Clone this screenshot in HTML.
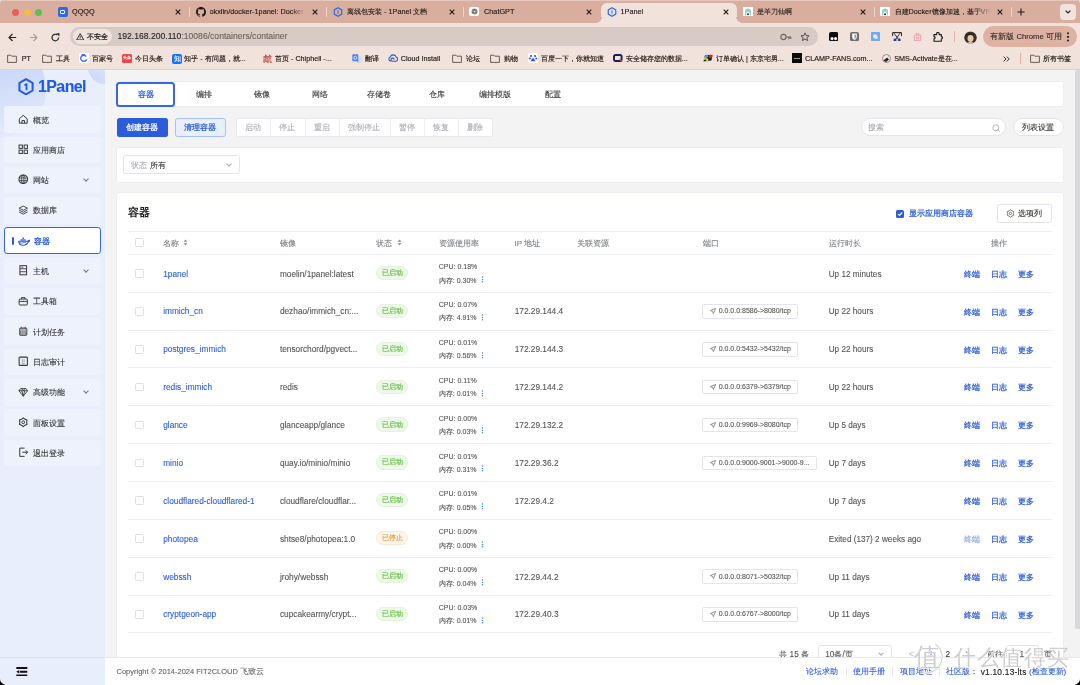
<!DOCTYPE html><html><head><meta charset="utf-8"><style>*{margin:0;padding:0;box-sizing:border-box}
html,body{width:1080px;height:685px;overflow:hidden;background:linear-gradient(#D3DCDF 0,#D3DCDF 50%,#000 50%)}
body{font-family:"Liberation Sans",sans-serif;position:relative;color:#333;-webkit-text-stroke:0.1px}
.a{position:absolute;white-space:nowrap}
#win{will-change:transform;position:absolute;left:0;top:0;width:1080px;height:685px;overflow:hidden;border-radius:4px 4px 7px 7px;background:#F3F3F3}
#tabs{position:absolute;left:0;top:0;width:1080px;height:23px;background:#D9AE9E;border-top:1px solid #E6C6BA}
.dot{position:absolute;top:8.5px;width:7px;height:7px;border-radius:50%}
.tt{position:absolute;font-size:7.3px;color:#1E1714;-webkit-text-stroke:0.12px;white-space:nowrap;overflow:hidden}
.tx{position:absolute;top:7.6px;width:8px;height:8px}
.sep{position:absolute;top:7px;width:1.2px;height:10px;background:#EDD3C9}
.fav{position:absolute;top:7px;width:10px;height:10px;border-radius:2px}
#tool{position:absolute;left:0;top:23px;width:1080px;height:25px;background:#F2E2DC}
#bm{position:absolute;left:0;top:48px;width:1080px;height:22px;background:#F2E2DC}
.bmi{position:absolute;top:54.3px;font-size:7.2px;color:#1E1714;-webkit-text-stroke:0.15px;white-space:nowrap}
.bic{position:absolute;top:54px;width:9px;height:9px;border-radius:1.5px}
#side{position:absolute;left:0;top:70px;width:105px;height:615px;background:#E8EEFB;overflow:hidden}
.mi{position:absolute;left:4px;width:96.5px;height:26.5px;background:#EEF2FC;border-radius:3px;font-size:8.6px;color:#333}
.mi .t{position:absolute;left:29px;top:8px;white-space:nowrap}
.mi svg{position:absolute;left:13.5px;top:7.5px}
.chev{position:absolute;width:4px;height:4px;border-right:1px solid #777;border-bottom:1px solid #777;transform:rotate(45deg)}
#main{position:absolute;left:105px;top:70px;width:975px;height:615px;background:#F2F2F2;overflow:hidden}
.card{position:absolute;background:#fff;border-radius:3px}
.btn{position:absolute;font-size:8.3px;text-align:center;border-radius:2.5px;white-space:nowrap}
.th{position:absolute;font-size:8.3px;color:#808080;white-space:nowrap}
.hl{position:absolute;left:23.5px;width:923px;height:1px;background:#EDEEF1}
.cb{position:absolute;width:8.5px;height:8.5px;border:1px solid #DCDFE6;border-radius:1.5px;background:#fff}
.nm{position:absolute;font-size:8.3px;color:#2A5CDC;white-space:nowrap}
.tx2{position:absolute;font-size:8.3px;color:#555;white-space:nowrap}
.tag{position:absolute;width:32.5px;height:14px;border-radius:7px;font-size:7.4px;text-align:center;line-height:12px;white-space:nowrap}
.tg{background:#EBF7E6;border:1px solid #DBF0D1;color:#6CC04A}
.to{background:#FDF3E7;border:1px solid #F8E3C8;color:#E6A23C}
.res{position:absolute;font-size:7.4px;color:#555;white-space:nowrap}
.port{position:absolute;height:13px;border:1px solid #E4E7ED;border-radius:2px;font-size:7.2px;color:#555;line-height:11px;white-space:nowrap}
.op{position:absolute;font-size:8.3px;color:#2A5CDC;white-space:nowrap}
#foot{position:absolute;left:105px;top:657px;width:975px;height:28px;background:#fff;border-top:1px solid #E8E8E8}
</style></head><body><div id="win">
<div id="tabs"></div>
<div class="dot" style="left:12px;background:#EC5F57"></div>
<div class="dot" style="left:24px;background:#F2BD3F"></div>
<div class="dot" style="left:35px;background:#5EC147"></div>
<div style="position:absolute;left:601px;top:3px;width:136px;height:21px;background:#F2E2DC;border-radius:6px 6px 0 0"></div>
<div style="position:absolute;left:596px;top:17px;width:6px;height:6px;background:radial-gradient(circle at 0 0,#D9AE9E 5.5px,#F2E2DC 6px)"></div>
<div style="position:absolute;left:736px;top:17px;width:6px;height:6px;background:radial-gradient(circle at 100% 0,#D9AE9E 5.5px,#F2E2DC 6px)"></div>
<div style="position:absolute;left:58px;top:7px;width:9.5px;height:9.5px;border-radius:2px;background:#2C6BE6"></div>
<div style="position:absolute;left:60.2px;top:9.5px;width:5px;height:4.5px;border:1.2px solid #fff;border-radius:1px"></div>
<div class="tt" style="left:72px;top:6.5px;width:98px">QQQQ</div>
<svg class="tx" style="left:174px" width="8" height="8" viewBox="0 0 8 8"><path d="M1.7 1.7L6.3 6.3M6.3 1.7L1.7 6.3" stroke="#1E1714" stroke-width="1.1"/></svg>
<div class="sep" style="left:189px"></div>
<svg style="position:absolute;left:195.5px;top:6.5px" width="10" height="10" viewBox="0 0 16 16"><path fill="#1b1b1b" d="M8 0C3.58 0 0 3.58 0 8c0 3.54 2.29 6.53 5.47 7.59.4.07.55-.17.55-.38 0-.19-.01-.82-.01-1.49-2.01.37-2.53-.49-2.69-.94-.09-.23-.48-.94-.82-1.13-.28-.15-.68-.52-.01-.53.63-.01 1.08.58 1.23.82.72 1.21 1.87.87 2.33.66.07-.52.28-.87.51-1.07-1.78-.2-3.64-.89-3.64-3.95 0-.87.31-1.59.82-2.15-.08-.2-.36-1.02.08-2.12 0 0 .67-.21 2.2.82.64-.18 1.32-.27 2-.27.68 0 1.36.09 2 .27 1.53-1.04 2.2-.82 2.2-.82.44 1.1.16 1.92.08 2.12.51.56.82 1.27.82 2.15 0 3.07-1.87 3.75-3.65 3.95.29.25.54.73.54 1.48 0 1.07-.01 1.93-.01 2.2 0 .21.15.46.55.38A8.013 8.013 0 0016 8c0-4.42-3.58-8-8-8z"/></svg>
<div class="tt" style="left:209.5px;top:6.5px;width:97.5px">okxlin/docker-1panel: Docker</div>
<svg class="tx" style="left:311px" width="8" height="8" viewBox="0 0 8 8"><path d="M1.7 1.7L6.3 6.3M6.3 1.7L1.7 6.3" stroke="#1E1714" stroke-width="1.1"/></svg>
<div class="sep" style="left:326px"></div>
<svg style="position:absolute;left:333px;top:6.5px" width="10" height="10" viewBox="0 0 20 20"><path d="M10 1.5L17.5 5.8V14.2L10 18.5L2.5 14.2V5.8Z" fill="none" stroke="#2F6BE8" stroke-width="2.4"/><path d="M9 6.5h2v7H9z" fill="#2F6BE8"/></svg>
<div class="tt" style="left:347px;top:6.5px;width:97px">离线包安装 - 1Panel 文档</div>
<svg class="tx" style="left:448px" width="8" height="8" viewBox="0 0 8 8"><path d="M1.7 1.7L6.3 6.3M6.3 1.7L1.7 6.3" stroke="#1E1714" stroke-width="1.1"/></svg>
<div class="sep" style="left:463px"></div>
<div style="position:absolute;left:469.4px;top:7px;width:9.4px;height:9.2px;border-radius:2px;background:#fff"></div>
<svg style="position:absolute;left:470.6px;top:8.2px" width="7" height="7" viewBox="0 0 7 7"><circle cx="3.5" cy="3.5" r="3" fill="#8a8a8a"/><path d="M3.5 1V3.5L5.7 4.8M3.5 3.5L1.3 4.8M2.2 1.8L3.5 3.5M4.8 1.8" fill="none" stroke="#555" stroke-width="0.7"/><circle cx="3.5" cy="3.5" r="0.8" fill="#eee"/></svg>
<div class="tt" style="left:484px;top:6.5px;width:97px">ChatGPT</div>
<svg class="tx" style="left:585px" width="8" height="8" viewBox="0 0 8 8"><path d="M1.7 1.7L6.3 6.3M6.3 1.7L1.7 6.3" stroke="#1E1714" stroke-width="1.1"/></svg>
<svg style="position:absolute;left:606.5px;top:6.5px" width="10" height="10" viewBox="0 0 20 20"><path d="M10 1.5L17.5 5.8V14.2L10 18.5L2.5 14.2V5.8Z" fill="none" stroke="#2F6BE8" stroke-width="2.4"/><path d="M9 6.5h2v7H9z" fill="#2F6BE8"/></svg>
<div class="tt" style="left:620.5px;top:6.5px;width:97.0px">1Panel</div>
<svg class="tx" style="left:721.5px" width="8" height="8" viewBox="0 0 8 8"><path d="M1.7 1.7L6.3 6.3M6.3 1.7L1.7 6.3" stroke="#1E1714" stroke-width="1.1"/></svg>
<div style="position:absolute;left:743px;top:6.9px;width:9.7px;height:9.3px;background:#fff"></div>
<svg style="position:absolute;left:743.8px;top:8px" width="8" height="8" viewBox="0 0 8 8"><path d="M1 7.5V3.5A3 3 0 0 1 7 3.5V7.5H5.8V4.5H2.2V7.5Z" fill="#8CCFCF"/><circle cx="4" cy="4.6" r="1.1" fill="#F3E6D8"/><circle cx="4" cy="6.3" r="1" fill="#2a2a2a"/></svg>
<div class="tt" style="left:756.5px;top:6.5px;width:98.0px">是羊刀仙啊</div>
<svg class="tx" style="left:858.5px" width="8" height="8" viewBox="0 0 8 8"><path d="M1.7 1.7L6.3 6.3M6.3 1.7L1.7 6.3" stroke="#1E1714" stroke-width="1.1"/></svg>
<div class="sep" style="left:874px"></div>
<div style="position:absolute;left:880px;top:6.9px;width:9.7px;height:9.3px;background:#fff"></div>
<svg style="position:absolute;left:880.8px;top:8px" width="8" height="8" viewBox="0 0 8 8"><path d="M1 7.5V3.5A3 3 0 0 1 7 3.5V7.5H5.8V4.5H2.2V7.5Z" fill="#8CCFCF"/><circle cx="4" cy="4.6" r="1.1" fill="#F3E6D8"/><circle cx="4" cy="6.3" r="1" fill="#2a2a2a"/></svg>
<div class="tt" style="left:894.5px;top:6.5px;width:97.0px">自建Docker镜像加速，基于VP</div>
<svg class="tx" style="left:995.5px" width="8" height="8" viewBox="0 0 8 8"><path d="M1.7 1.7L6.3 6.3M6.3 1.7L1.7 6.3" stroke="#1E1714" stroke-width="1.1"/></svg>
<div class="sep" style="left:1010.5px"></div>
<div style="position:absolute;left:290px;top:4px;width:16px;height:16px;background:linear-gradient(90deg,rgba(217,174,158,0),#D9AE9E)"></div>
<div style="position:absolute;left:975px;top:4px;width:16px;height:16px;background:linear-gradient(90deg,rgba(217,174,158,0),#D9AE9E)"></div>
<svg style="position:absolute;left:1016.8px;top:8.2px" width="8" height="8" viewBox="0 0 8 8"><path d="M4 0.4V7.6M0.4 4H7.6" stroke="#1E1714" stroke-width="1.05"/></svg>
<div style="position:absolute;left:1060px;top:3.7px;width:16px;height:16px;border-radius:4px;background:#F1E3DE"></div>
<svg style="position:absolute;left:1065px;top:10px" width="6" height="4" viewBox="0 0 6 4"><path d="M0.6 0.6L3 3L5.4 0.6" fill="none" stroke="#222" stroke-width="1.2"/></svg>
<div id="tool"></div>
<svg style="position:absolute;left:8px;top:32.5px" width="9" height="9" viewBox="0 0 9 9"><path d="M8.2 4.5H1.2M4.5 1L1 4.5L4.5 8" fill="none" stroke="#222" stroke-width="1.1"/></svg>
<svg style="position:absolute;left:29px;top:32.5px" width="9" height="9" viewBox="0 0 9 9"><path d="M0.8 4.5H7.8M4.5 1L8 4.5L4.5 8" fill="none" stroke="#A89D99" stroke-width="1.1"/></svg>
<svg style="position:absolute;left:50.5px;top:32.5px" width="9" height="9" viewBox="0 0 9 9"><path d="M7.6 4.6A3.3 3.3 0 1 1 6.3 1.9" fill="none" stroke="#222" stroke-width="1.15"/><path d="M5.2 0.3H8.4V3.5Z" fill="#222"/></svg>
<div style="position:absolute;left:70px;top:26.8px;width:747.5px;height:19.5px;border-radius:10px;background:#D8CAC5"></div>
<div style="position:absolute;left:72.6px;top:29.4px;width:39px;height:14.5px;border-radius:7.5px;background:#F0E3DE"></div>
<svg style="position:absolute;left:75.8px;top:32.6px" width="8.4" height="7.5" viewBox="0 0 10 9"><path d="M5 0.8L9.3 8.3H0.7Z" fill="none" stroke="#222" stroke-width="1.1" stroke-linejoin="round"/><path d="M5 3.3V5.8M5 6.6V7.4" stroke="#222" stroke-width="1"/></svg>
<div class="a" style="left:86.8px;top:31.5px;font-size:7px;color:#1a1a1a;-webkit-text-stroke:0.25px">不安全</div>
<div class="a" style="left:117.5px;top:31px;font-size:8.6px;color:#222">192.168.200.110<span style="color:#6B605C">:10086/containers/container</span></div>
<svg style="position:absolute;left:780px;top:32.5px" width="12" height="8" viewBox="0 0 12 8"><circle cx="3.5" cy="4" r="2.6" fill="none" stroke="#6d6360" stroke-width="1.1"/><path d="M6.1 4H11M9 4V6.2M10.8 4V6" fill="none" stroke="#6d6360" stroke-width="1.1"/></svg>
<svg style="position:absolute;left:799.5px;top:31.5px" width="10" height="10" viewBox="0 0 10 10"><path d="M5 0.9L6.2 3.6L9.1 3.8L6.9 5.7L7.6 8.6L5 7L2.4 8.6L3.1 5.7L0.9 3.8L3.8 3.6Z" fill="none" stroke="#444" stroke-width="0.9" stroke-linejoin="round"/></svg>
<svg style="position:absolute;left:828.8px;top:31.8px" width="9.6" height="9.2" viewBox="0 0 9.6 9.2"><rect width="9.6" height="9.2" rx="2" fill="#0d0d0d"/><circle cx="3" cy="6.6" r="1.55" fill="#fff"/><circle cx="6.6" cy="6.6" r="1.55" fill="#fff"/></svg>
<svg style="position:absolute;left:850px;top:31.8px" width="9" height="9.3" viewBox="0 0 9 9.3"><rect width="9" height="9.3" rx="2" fill="#6f6f6f"/><path d="M2.2 1.6H6.8V5C6.8 6.6 5.6 7.4 4.5 8C3.4 7.4 2.2 6.6 2.2 5Z" fill="#fff"/><path d="M4.5 2.4H6V5C6 6 5.3 6.6 4.5 7Z" fill="#9a9a9a"/></svg>
<svg style="position:absolute;left:871px;top:31.8px" width="9" height="9.2" viewBox="0 0 9 9.2"><rect width="9" height="9.2" rx="0.8" fill="#6FA8F4"/><path d="M2 4.2C2 2.8 3.2 2 4.3 2.3C5.6 2.6 6.2 3.6 6.8 5C7.2 6 6.8 7 5.6 7C4 7 2 6 2 4.2Z" fill="#E3EEFD"/></svg>
<svg style="position:absolute;left:891.6px;top:31.6px" width="10.2" height="9.8" viewBox="0 0 10.2 9.8"><path d="M0.6 4.2V0.6H9.6V4.2" fill="none" stroke="#222" stroke-width="1"/><path d="M2 1L6.4 7.3M8.2 1L3.8 7.3" stroke="#222" stroke-width="0.9"/><circle cx="3" cy="8" r="1.5" fill="#1F3FA0"/><circle cx="7.2" cy="8" r="1.5" fill="#1F3FA0"/></svg>
<svg style="position:absolute;left:913px;top:31.8px" width="9" height="9.5" viewBox="0 0 9 9.5"><path d="M1.3 3.2H7.7V8.6H1.3Z M2.8 0.8L4.5 3.2L6.2 0.8 M3 5L6 7.2M6 5L3 7.2" fill="none" stroke="#F0A8BC" stroke-width="1.2" stroke-linejoin="round"/></svg>
<svg style="position:absolute;left:933px;top:31.5px" width="10.5" height="10" viewBox="0 0 10.5 10"><path d="M1 2.6H3.6V1.8A1.3 1.3 0 0 1 6.2 1.8V2.6H8.3V4.6A1.2 1.2 0 0 1 8.3 7V9.2H1V6.8A1.1 1.1 0 0 0 1 4.6Z" fill="none" stroke="#1a1a1a" stroke-width="1.15" stroke-linejoin="round"/></svg>
<div style="position:absolute;left:954px;top:31px;width:1px;height:11px;background:#E2B5A6"></div>
<svg style="position:absolute;left:964px;top:30.5px" width="13" height="13" viewBox="0 0 13 13"><defs><clipPath id="av"><circle cx="6.5" cy="6.5" r="6.2"/></clipPath></defs><g clip-path="url(#av)"><rect width="13" height="13" fill="#C9B59A"/><path d="M0 13V6C1 2 4 0.8 6.5 0.8C9.5 0.8 12 2.5 13 6V13Z" fill="#3B2F2A"/><ellipse cx="6.5" cy="7.5" rx="3" ry="3.4" fill="#E9C8A8"/><path d="M2.5 5.5C3.5 3 9.5 3 10.5 5.5L10 4C8 2 5 2 3 4Z" fill="#2A211D"/><path d="M2 13C3 10.5 10 10.5 11 13Z" fill="#F4F0EA"/></g></svg>
<div style="position:absolute;left:982.5px;top:26.3px;width:94.5px;height:21px;border-radius:10.5px;background:#DDB2A3"></div>
<div class="a" style="left:990.3px;top:32px;font-size:7.7px;color:#2d2320">有新版 Chrome 可用</div>
<svg style="position:absolute;left:1065.5px;top:31.8px" width="4" height="10" viewBox="0 0 4 10"><circle cx="2" cy="1.3" r="1.05" fill="#222"/><circle cx="2" cy="4.9" r="1.05" fill="#222"/><circle cx="2" cy="8.5" r="1.05" fill="#222"/></svg>
<div id="bm"></div>
<svg style="position:absolute;left:7.3px;top:53.5px" width="10" height="9" viewBox="0 0 10 9"><path d="M0.6 1.2H3.8L4.8 2.2H9.4V8.4H0.6Z" fill="none" stroke="#5a504c" stroke-width="0.9" stroke-linejoin="round"/></svg>
<div class="bmi" style="left:21.7px">PT</div>
<svg style="position:absolute;left:41.7px;top:53.5px" width="10" height="9" viewBox="0 0 10 9"><path d="M0.6 1.2H3.8L4.8 2.2H9.4V8.4H0.6Z" fill="none" stroke="#5a504c" stroke-width="0.9" stroke-linejoin="round"/></svg>
<div class="bmi" style="left:55.7px">工具</div>
<svg style="position:absolute;left:79.3px;top:53px" width="10" height="10" viewBox="0 0 10 10"><rect width="10" height="10" rx="2" fill="#fff"/><path d="M7.2 3.5A3 3 0 1 0 7.6 6.2" fill="none" stroke="#3a6ef0" stroke-width="1.4"/><path d="M2.5 1.5H6" stroke="#3a6ef0" stroke-width="1.2"/></svg>
<div class="bmi" style="left:92.3px">百家号</div>
<div class="bic" style="left:121.7px;top:53.5px;width:10px;background:#E9474A"></div><div class="a" style="left:123.2px;top:55px;font-size:4px;color:#fff">头条</div>
<div class="bmi" style="left:135px">今日头条</div>
<div class="bic" style="left:172.3px;top:53.5px;width:10px;height:10px;background:#1772F6;border-radius:2px"></div><div class="a" style="left:173.8px;top:54px;font-size:7px;color:#fff">知</div>
<div class="bmi" style="left:184.3px">知乎 - 有问题，就...</div>
<div class="a" style="left:262.7px;top:53px;font-size:9px;color:#B2443C">虤</div>
<div class="bmi" style="left:275px">首页 - Chiphell -...</div>
<svg style="position:absolute;left:351.7px;top:53.5px" width="10" height="9" viewBox="0 0 10 9"><rect x="4" y="2.2" width="5.5" height="6.5" rx="0.8" fill="#D9DCE0"/><rect x="0.3" y="0.3" width="6" height="7" rx="0.8" fill="#4A86F0"/><circle cx="3.3" cy="3.8" r="1.5" fill="none" stroke="#DDE8FC" stroke-width="0.9"/><path d="M5 7.3L6.4 8.8V7.3Z" fill="#3B6ED0"/></svg>
<div class="bmi" style="left:365px">翻译</div>
<svg style="position:absolute;left:387.8px;top:54px" width="10.5" height="8" viewBox="0 0 10.5 8"><path d="M2.8 7.3A2.3 2.3 0 0 1 2.3 2.9A3.1 3.1 0 0 1 8.2 3.2A2.1 2.1 0 0 1 8 7.3H4.5A1.6 1.6 0 1 1 6.2 5.6" fill="none" stroke="#2C5BB8" stroke-width="1.1"/></svg>
<div class="bmi" style="left:400.7px">Cloud Install</div>
<svg style="position:absolute;left:452.3px;top:53.5px" width="10" height="9" viewBox="0 0 10 9"><path d="M0.6 1.2H3.8L4.8 2.2H9.4V8.4H0.6Z" fill="none" stroke="#5a504c" stroke-width="0.9" stroke-linejoin="round"/></svg>
<div class="bmi" style="left:466px">论坛</div>
<svg style="position:absolute;left:490px;top:53.5px" width="10" height="9" viewBox="0 0 10 9"><path d="M0.6 1.2H3.8L4.8 2.2H9.4V8.4H0.6Z" fill="none" stroke="#5a504c" stroke-width="0.9" stroke-linejoin="round"/></svg>
<div class="bmi" style="left:504px">购物</div>
<svg style="position:absolute;left:528.3px;top:53px" width="10" height="10" viewBox="0 0 10 10"><rect width="10" height="10" rx="2" fill="#fff"/><circle cx="3" cy="3" r="1.1" fill="#3050E0"/><circle cx="7" cy="3" r="1.1" fill="#3050E0"/><circle cx="1.8" cy="5.5" r="1" fill="#3050E0"/><circle cx="8.2" cy="5.5" r="1" fill="#3050E0"/><path d="M5 4.5L7.5 8.2H2.5Z" fill="#3050E0"/></svg>
<div class="bmi" style="left:540.7px">百度一下，你就知道</div>
<svg style="position:absolute;left:612.8px;top:54.2px" width="10" height="8" viewBox="0 0 10 8"><rect x="1" y="1" width="7.6" height="6" rx="1.6" fill="none" stroke="#14205A" stroke-width="1.9"/><path d="M6.6 5.2L9.2 7.6" stroke="#E0483A" stroke-width="1.3"/></svg>
<div class="bmi" style="left:625.7px">安全储存您的数据...</div>
<svg style="position:absolute;left:703.3px;top:54px" width="10" height="8" viewBox="0 0 10 8"><path d="M0.5 7.5L2 1H9.5L8.5 6.5Z" fill="#222"/><circle cx="3.5" cy="2.2" r="1.6" fill="#4A9BE8"/><circle cx="7.5" cy="2.3" r="1.7" fill="#D8282B"/><circle cx="2.2" cy="4.5" r="1.5" fill="#9BD05A"/><rect x="3.2" y="4.5" width="2" height="3.3" fill="#EAD05A"/></svg>
<div class="bmi" style="left:716px">订单确认 | 东京宅男...</div>
<div style="position:absolute;left:791.9000000000001px;top:53.2px;width:10px;height:9.8px;background:#0A0A0A"></div><div style="position:absolute;left:793.9000000000001px;top:57.6px;width:6px;height:1px;background:#9a9a9a"></div>
<div class="bmi" style="left:805px">CLAMP-FANS.com...</div>
<svg style="position:absolute;left:882.0999999999999px;top:53.8px" width="9" height="9" viewBox="0 0 9 9"><circle cx="4.5" cy="4.5" r="4" fill="#F4ECE8" stroke="#777" stroke-width="0.8"/><path d="M1.5 6.5L5 3.5L7 5.5L4 8Z" fill="#222"/><path d="M5 3.5L7.5 1.5L8 3Z" fill="#F0B090"/></svg>
<div class="bmi" style="left:894.3px">SMS-Activate是在...</div>
<svg style="position:absolute;left:1003px;top:55.5px" width="7" height="6" viewBox="0 0 7 6"><path d="M0.6 0.6L3 3L0.6 5.4M3.8 0.6L6.2 3L3.8 5.4" fill="none" stroke="#333" stroke-width="1"/></svg>
<div style="position:absolute;left:1020px;top:53px;width:1px;height:11px;background:#E2B5A6"></div>
<svg style="position:absolute;left:1030px;top:53.5px" width="10" height="9" viewBox="0 0 10 9"><path d="M0.6 1.2H3.8L4.8 2.2H9.4V8.4H0.6Z" fill="none" stroke="#5a504c" stroke-width="0.9" stroke-linejoin="round"/></svg>
<div class="bmi" style="left:1043.3px">所有书签</div>
<div style="position:absolute;left:0;top:69.4px;width:1080px;height:1px;background:#DDD0CB"></div>
<div id="side">
<div style="position:absolute;left:-52px;top:-30px;width:98px;height:98px;border-radius:50%;background:linear-gradient(165deg,#C2D2F7 20%,#D3DEF9 55%,#E6ECFB 95%)"></div>
<div style="position:absolute;left:88px;top:-20px;width:34px;height:34px;border-radius:50%;background:linear-gradient(215deg,#E6ECFB 25%,#CCD9F8 85%)"></div>
</div>
<svg style="position:absolute;left:17.5px;top:77.5px" width="16" height="17.5" viewBox="0 0 16 17.5"><path d="M8 1.2L14.6 5V12.5L8 16.3L1.4 12.5V5Z" fill="none" stroke="#1D5AE6" stroke-width="2"/><path d="M6.3 6.2L8.6 5.2H9.4V12.3H7.6V7.4L6.3 7.9Z" fill="#1D5AE6"/></svg>
<div class="a" style="left:38.3px;top:77px;font-size:16.8px;font-weight:bold;color:#1D5AE6;letter-spacing:-0.6px;transform:scaleX(0.95);transform-origin:0 0">1Panel</div>
<div class="mi" style="top:106.2px"></div>
<svg style="position:absolute;left:17.5px;top:113.8px" width="10.5" height="10.5" viewBox="0 0 12 12"><path d="M1.5 5.5L6 1.5L10.5 5.5V10.5H1.5Z M4.5 10.5V7.5H7.5V10.5" fill="none" stroke="#333" stroke-width="1.1" stroke-linejoin="round"/></svg>
<div class="a" style="left:32.8px;top:114.5px;font-size:8px;color:#333">概览</div>
<div class="mi" style="top:136.52px"></div>
<svg style="position:absolute;left:17.5px;top:144.12px" width="10.5" height="10.5" viewBox="0 0 12 12"><rect x="1.2" y="1.2" width="3.8" height="3.8" fill="none" stroke="#333" stroke-width="1.1"/><rect x="7" y="1.2" width="3.8" height="3.8" fill="none" stroke="#333" stroke-width="1.1"/><rect x="1.2" y="7" width="3.8" height="3.8" fill="none" stroke="#333" stroke-width="1.1"/><rect x="7" y="7" width="3.8" height="3.8" fill="none" stroke="#333" stroke-width="1.1"/></svg>
<div class="a" style="left:32.8px;top:144.82000000000002px;font-size:8px;color:#333">应用商店</div>
<div class="mi" style="top:166.84px"></div>
<svg style="position:absolute;left:17.5px;top:174.44px" width="10.5" height="10.5" viewBox="0 0 12 12"><circle cx="6" cy="6" r="4.9" fill="none" stroke="#333" stroke-width="1.3"/><ellipse cx="6" cy="6" rx="2.2" ry="4.9" fill="none" stroke="#333" stroke-width="0.9"/><path d="M6 1.2V10.8M1.5 4.5H10.5M1.5 7.5H10.5" fill="none" stroke="#333" stroke-width="0.8"/></svg>
<div class="a" style="left:32.8px;top:175.14000000000001px;font-size:8px;color:#333">网站</div>
<div class="chev" style="left:83.8px;top:177.14000000000001px"></div>
<div class="mi" style="top:197.16000000000003px"></div>
<svg style="position:absolute;left:17.5px;top:204.76000000000002px" width="10.5" height="10.5" viewBox="0 0 12 12"><path d="M6 1.2L10.8 3.6L6 6L1.2 3.6Z" fill="none" stroke="#333" stroke-width="1"/><path d="M1.2 5.8L6 8.2L10.8 5.8M1.2 8L6 10.4L10.8 8" fill="none" stroke="#333" stroke-width="1"/></svg>
<div class="a" style="left:32.8px;top:205.46000000000004px;font-size:8px;color:#333">数据库</div>
<div class="mi" style="top:227.48000000000002px;background:#fff;border:1.5px solid #3366E0"></div>
<div style="position:absolute;left:12.3px;top:236.78000000000003px;width:2px;height:8.3px;background:#2A5CDC;border-radius:1px"></div>
<svg style="position:absolute;left:17.8px;top:235.08px" width="12.5" height="12" viewBox="0 0 12.5 12"><path d="M0.7 6.3H9.6C10.1 5.6 10.9 5.2 12 5.3C11.6 6.1 11 6.6 10.3 6.8C9.4 9.2 7.3 10.3 4.8 10.3C2.4 10.3 0.9 8.8 0.7 6.3Z" fill="none" stroke="#2A5CDC" stroke-width="1.1" stroke-linejoin="round"/><path d="M1.2 7.6C3.5 8.3 6 8 8.4 6.8" fill="none" stroke="#2A5CDC" stroke-width="0.8"/><path d="M2.6 4.2h1.5v1.5H2.6zM4.4 4.2h1.5v1.5H4.4zM6.2 4.2h1.5v1.5H6.2zM4.4 2.4h1.5v1.5H4.4z" fill="#2A5CDC"/></svg>
<div class="a" style="left:33.8px;top:235.78000000000003px;font-size:8px;color:#2A5CDC;-webkit-text-stroke:0.3px">容器</div>
<div class="mi" style="top:257.8px"></div>
<svg style="position:absolute;left:17.5px;top:265.40000000000003px" width="10.5" height="10.5" viewBox="0 0 12 12"><rect x="2.2" y="0.8" width="7.6" height="10.4" fill="none" stroke="#333" stroke-width="1.1"/><path d="M2.2 4.3H9.8M2.2 7.7H9.8M4 2.5H6" fill="none" stroke="#333" stroke-width="1"/></svg>
<div class="a" style="left:32.8px;top:266.1px;font-size:8px;color:#333">主机</div>
<div class="chev" style="left:83.8px;top:268.1px"></div>
<div class="mi" style="top:288.12px"></div>
<svg style="position:absolute;left:17.5px;top:295.72px" width="10.5" height="10.5" viewBox="0 0 12 12"><rect x="1.3" y="3.5" width="9.4" height="6.8" rx="1" fill="none" stroke="#333" stroke-width="1.1"/><path d="M4 3.5V1.8H8V3.5M1.3 6.2H10.7M6 5.5V7" fill="none" stroke="#333" stroke-width="1"/></svg>
<div class="a" style="left:32.8px;top:296.42px;font-size:8px;color:#333">工具箱</div>
<div class="mi" style="top:318.44px"></div>
<svg style="position:absolute;left:17.5px;top:326.04px" width="10.5" height="10.5" viewBox="0 0 12 12"><rect x="1.8" y="2.2" width="8.4" height="8.6" rx="1.2" fill="#8a8a8a" stroke="#444" stroke-width="0.9"/><path d="M3.8 0.9V3M8.2 0.9V3" stroke="#444" stroke-width="1"/><path d="M2.3 4.4H9.7" stroke="#eee" stroke-width="0.7"/><path d="M4.3 5.6V10M6 5.6V10M7.7 5.6V10" stroke="#ccc" stroke-width="0.6"/></svg>
<div class="a" style="left:32.8px;top:326.74px;font-size:8px;color:#333">计划任务</div>
<div class="mi" style="top:348.76px"></div>
<svg style="position:absolute;left:17.5px;top:356.36px" width="10.5" height="10.5" viewBox="0 0 12 12"><rect x="1.3" y="1.3" width="9.4" height="9.4" rx="0.8" fill="none" stroke="#333" stroke-width="1.2"/><path d="M5 3.5V7.5M7 3.5V7.5M4.5 8.5H7.5" stroke="#888" stroke-width="0.8"/></svg>
<div class="a" style="left:32.8px;top:357.06px;font-size:8px;color:#333">日志审计</div>
<div class="mi" style="top:379.08px"></div>
<svg style="position:absolute;left:17.5px;top:386.68px" width="10.5" height="10.5" viewBox="0 0 12 12"><path d="M3 1.8H9L11 4.3L6 10.5L1 4.3Z M1 4.3H11M4 1.8L6 4.3L8 1.8M4.3 4.3L6 10.5L7.7 4.3" fill="none" stroke="#333" stroke-width="1" stroke-linejoin="round"/></svg>
<div class="a" style="left:32.8px;top:387.38px;font-size:8px;color:#333">高级功能</div>
<div class="chev" style="left:83.8px;top:389.38px"></div>
<div class="mi" style="top:409.4px"></div>
<svg style="position:absolute;left:17.5px;top:417.0px" width="10.5" height="10.5" viewBox="0 0 12 12"><path d="M6.00 1.00L7.95 2.62L10.33 3.50L9.90 6.00L10.33 8.50L7.95 9.38L6.00 11.00L4.05 9.38L1.67 8.50L2.10 6.00L1.67 3.50L4.05 2.62Z" fill="none" stroke="#333" stroke-width="1.2" stroke-linejoin="round"/><circle cx="6" cy="6" r="1.6" fill="none" stroke="#333" stroke-width="1.1"/></svg>
<div class="a" style="left:32.8px;top:417.7px;font-size:8px;color:#333">面板设置</div>
<div class="mi" style="top:439.71999999999997px"></div>
<svg style="position:absolute;left:17.5px;top:447.32px" width="10.5" height="10.5" viewBox="0 0 12 12"><path d="M7.5 1.3H2V10.7H7.5M5 6H11M8.8 3.8L11 6L8.8 8.2" fill="none" stroke="#333" stroke-width="1.1" stroke-linejoin="round"/></svg>
<div class="a" style="left:32.8px;top:448.02px;font-size:8px;color:#333">退出登录</div>
<div style="position:absolute;left:0;top:657px;width:105px;height:1px;background:#DCE2F0"></div>
<svg style="position:absolute;left:16px;top:666.5px" width="11.5" height="9.5" viewBox="0 0 11.5 9.5"><path d="M0.3 1H11.3M3.8 4.75H11.3M0.3 8.5H11.3" stroke="#111" stroke-width="1.9"/><path d="M0.2 4.75L3.2 2.9V6.6Z" fill="#111"/></svg>
<div style="position:absolute;left:116.20px;top:81.00px;width:947.80px;height:26.30px;background:#fff;border:1px solid #EAECF1;border-radius:3px"></div>
<div style="position:absolute;left:116.40px;top:81.80px;width:58.40px;height:25.20px;border:2px solid #3568E2;border-radius:3.5px"></div>
<div class="a" style="left:116.70px;top:88.50px;width:58.00px;text-align:center;line-height:12px;font-size:8px;color:#2A5CDC;-webkit-text-stroke:0.25px">容器</div>
<div class="a" style="left:174.90px;top:88.50px;width:58.00px;text-align:center;line-height:12px;font-size:8px;color:#333;">编排</div>
<div class="a" style="left:233.10px;top:88.50px;width:58.00px;text-align:center;line-height:12px;font-size:8px;color:#333;">镜像</div>
<div class="a" style="left:291.30px;top:88.50px;width:58.00px;text-align:center;line-height:12px;font-size:8px;color:#333;">网络</div>
<div class="a" style="left:349.50px;top:88.50px;width:58.00px;text-align:center;line-height:12px;font-size:8px;color:#333;">存储卷</div>
<div class="a" style="left:407.70px;top:88.50px;width:58.00px;text-align:center;line-height:12px;font-size:8px;color:#333;">仓库</div>
<div class="a" style="left:465.90px;top:88.50px;width:58.00px;text-align:center;line-height:12px;font-size:8px;color:#333;">编排模版</div>
<div class="a" style="left:524.10px;top:88.50px;width:58.00px;text-align:center;line-height:12px;font-size:8px;color:#333;">配置</div>
<div style="position:absolute;left:116.50px;top:118.20px;width:51.30px;height:18.60px;background:#2A5CDC;border-radius:2.5px"></div>
<div class="a" style="left:117.10px;top:121.50px;width:50.00px;text-align:center;line-height:12px;font-size:8px;color:#fff;-webkit-text-stroke:0.25px">创建容器</div>
<div style="position:absolute;left:175.00px;top:118.20px;width:50.70px;height:18.60px;background:#E9F0FD;border:1px solid #A8C0F3;border-radius:2.5px"></div>
<div class="a" style="left:175.30px;top:121.50px;width:50.00px;text-align:center;line-height:12px;font-size:8px;color:#2A5CDC;-webkit-text-stroke:0.25px">清理容器</div>
<div style="position:absolute;left:236.00px;top:118.40px;width:256.60px;height:18.20px;background:#fff;border:1px solid #E8E9EC;border-radius:2.5px"></div>
<div class="a" style="left:236.00px;top:121.50px;width:34.00px;text-align:center;line-height:12px;font-size:8px;color:#A8ABB2;">启动</div>
<div style="position:absolute;left:270.00px;top:118.40px;width:1.00px;height:18.20px;background:#ECEDF0"></div>
<div class="a" style="left:270.00px;top:121.50px;width:34.60px;text-align:center;line-height:12px;font-size:8px;color:#A8ABB2;">停止</div>
<div style="position:absolute;left:304.60px;top:118.40px;width:1.00px;height:18.20px;background:#ECEDF0"></div>
<div class="a" style="left:304.60px;top:121.50px;width:34.00px;text-align:center;line-height:12px;font-size:8px;color:#A8ABB2;">重启</div>
<div style="position:absolute;left:338.60px;top:118.40px;width:1.00px;height:18.20px;background:#ECEDF0"></div>
<div class="a" style="left:338.60px;top:121.50px;width:51.00px;text-align:center;line-height:12px;font-size:8px;color:#A8ABB2;">强制停止</div>
<div style="position:absolute;left:389.60px;top:118.40px;width:1.00px;height:18.20px;background:#ECEDF0"></div>
<div class="a" style="left:389.60px;top:121.50px;width:34.40px;text-align:center;line-height:12px;font-size:8px;color:#A8ABB2;">暂停</div>
<div style="position:absolute;left:424.00px;top:118.40px;width:1.00px;height:18.20px;background:#ECEDF0"></div>
<div class="a" style="left:424.00px;top:121.50px;width:34.30px;text-align:center;line-height:12px;font-size:8px;color:#A8ABB2;">恢复</div>
<div style="position:absolute;left:458.30px;top:118.40px;width:1.00px;height:18.20px;background:#ECEDF0"></div>
<div class="a" style="left:458.30px;top:121.50px;width:34.30px;text-align:center;line-height:12px;font-size:8px;color:#A8ABB2;">删除</div>
<div style="position:absolute;left:861.10px;top:118.30px;width:145.10px;height:18.20px;background:#fff;border:1px solid #E3E5EA;border-radius:9px"></div>
<div class="a" style="left:868.00px;top:122.10px;line-height:12px;font-size:8px;color:#A8ABB2;">搜索</div>
<svg style="position:absolute;left:992px;top:124px" width="8.5" height="8.5" viewBox="0 0 9 9"><circle cx="4" cy="4" r="3.2" fill="none" stroke="#A8ABB2" stroke-width="0.9"/><path d="M6.4 6.4L8.3 8.3" stroke="#A8ABB2" stroke-width="0.9"/></svg>
<div style="position:absolute;left:1012.50px;top:118.30px;width:51.30px;height:18.20px;background:#fff;border:1px solid #DFE2E8;border-radius:9px"></div>
<div class="a" style="left:1013.20px;top:122.20px;width:50.00px;text-align:center;line-height:12px;font-size:8px;color:#333;">列表设置</div>
<div style="position:absolute;left:116.20px;top:147.40px;width:947.80px;height:35.20px;background:#fff;border:1px solid #EAECF1;border-radius:3px"></div>
<div style="position:absolute;left:123.40px;top:155.20px;width:116.30px;height:18.50px;background:#fff;border:1px solid #E1E3E8;border-radius:2.5px"></div>
<div class="a" style="left:130.50px;top:158.70px;line-height:12px;font-size:8.3px;color:#A8ABB2;">状态</div>
<div class="a" style="left:150.00px;top:158.70px;line-height:12px;font-size:8.3px;color:#333;">所有</div>
<div class="chev" style="left:226.5px;top:161.8px;border-color:#A8ABB2"></div>
<div style="position:absolute;left:116.20px;top:191.60px;width:947.80px;height:508.40px;background:#fff;border:1px solid #EAECF1;border-radius:3px"></div>
<div class="a" style="left:128.40px;top:205.00px;line-height:14px;font-size:10.8px;color:#222;font-weight:bold;-webkit-text-stroke:0">容器</div>
<div style="position:absolute;left:896.10px;top:210.00px;width:8.20px;height:8.20px;background:#2A5CDC;border-radius:1.5px"></div>
<svg style="position:absolute;left:897.2px;top:211.2px" width="6" height="6" viewBox="0 0 6 6"><path d="M1 3.1L2.5 4.5L5.1 1.5" fill="none" stroke="#fff" stroke-width="1.2"/></svg>
<div class="a" style="left:909.00px;top:208.00px;line-height:12px;font-size:8px;color:#2A5CDC;-webkit-text-stroke:0.25px">显示应用商店容器</div>
<div style="position:absolute;left:997.20px;top:204.40px;width:54.50px;height:18.40px;background:#fff;border:1px solid #E1E3E8;border-radius:2.5px"></div>
<svg style="position:absolute;left:1006.3px;top:209.2px" width="9" height="9" viewBox="0 0 12 12"><path d="M6.00 1.00L7.95 2.62L10.33 3.50L9.90 6.00L10.33 8.50L7.95 9.38L6.00 11.00L4.05 9.38L1.67 8.50L2.10 6.00L1.67 3.50L4.05 2.62Z" fill="none" stroke="#666" stroke-width="1.1" stroke-linejoin="round"/><circle cx="6" cy="6" r="1.6" fill="none" stroke="#666" stroke-width="1"/></svg>
<div class="a" style="left:1018.30px;top:207.60px;line-height:12px;font-size:8px;color:#333;">选项列</div>
<div style="position:absolute;left:128.20px;top:230.80px;width:923.60px;height:1.00px;background:#EDEEF1"></div>
<div style="position:absolute;left:128.20px;top:253.80px;width:923.60px;height:1.00px;background:#EDEEF1"></div>
<div class="cb" style="left:135px;top:238.2px"></div>
<div class="a" style="left:163.30px;top:237.50px;line-height:12px;font-size:8px;color:#7A7D85;">名称</div>
<div class="a" style="left:279.80px;top:237.50px;line-height:12px;font-size:8px;color:#7A7D85;">镜像</div>
<div class="a" style="left:376.00px;top:237.50px;line-height:12px;font-size:8px;color:#7A7D85;">状态</div>
<div class="a" style="left:439.00px;top:237.50px;line-height:12px;font-size:8px;color:#7A7D85;">资源使用率</div>
<div class="a" style="left:514.50px;top:237.50px;line-height:12px;font-size:8px;color:#7A7D85;">IP 地址</div>
<div class="a" style="left:576.80px;top:237.50px;line-height:12px;font-size:8px;color:#7A7D85;">关联资源</div>
<div class="a" style="left:702.60px;top:237.50px;line-height:12px;font-size:8px;color:#7A7D85;">端口</div>
<div class="a" style="left:828.50px;top:237.50px;line-height:12px;font-size:8px;color:#7A7D85;">运行时长</div>
<div class="a" style="left:991.40px;top:237.50px;line-height:12px;font-size:8px;color:#7A7D85;">操作</div>
<svg style="position:absolute;left:182.8px;top:239.1px" width="5" height="7" viewBox="0 0 5 7"><path d="M0.5 2.8L2.5 0.6L4.5 2.8Z M0.5 4.2L2.5 6.4L4.5 4.2Z" fill="#8B8E96"/></svg>
<svg style="position:absolute;left:396.8px;top:239.1px" width="5" height="7" viewBox="0 0 5 7"><path d="M0.5 2.8L2.5 0.6L4.5 2.8Z M0.5 4.2L2.5 6.4L4.5 4.2Z" fill="#8B8E96"/></svg>
<div style="position:absolute;left:128.20px;top:291.66px;width:923.60px;height:1.00px;background:#EDEEF1"></div>
<div class="cb" style="left:135px;top:269.33px"></div>
<div class="a" style="left:163.20px;top:267.63px;line-height:12px;font-size:8.3px;color:#2A5CDC;">1panel</div>
<div class="a" style="left:279.90px;top:267.63px;line-height:12px;font-size:8.3px;color:#555;">moelin/1panel:latest</div>
<div style="position:absolute;left:375.70px;top:266.03px;width:32.60px;height:14.20px;background:#EEF8EA;border:1px solid #E4F4DC;border-radius:7px"></div>
<div class="a" style="left:376.00px;top:267.13px;width:32.00px;text-align:center;line-height:12px;font-size:7px;color:#6DC44A;-webkit-text-stroke:0.2px">已启动</div>
<div class="a" style="left:438.80px;top:262.23px;line-height:10px;font-size:7.0px;color:#555;">CPU: 0.18%</div>
<div class="a" style="left:438.80px;top:275.63px;line-height:10px;font-size:7.0px;color:#555;">内存: 0.30%</div>
<svg style="position:absolute;left:480.8px;top:276.03px" width="3" height="7" viewBox="0 0 3 7"><circle cx="1.5" cy="1" r="0.75" fill="#3A86D8"/><circle cx="1.5" cy="3.4" r="0.75" fill="#3A86D8"/><circle cx="1.5" cy="5.8" r="0.75" fill="#3A86D8"/></svg>
<div class="a" style="left:828.70px;top:268.63px;line-height:12px;font-size:8.2px;color:#555;">Up 12 minutes</div>
<div class="a" style="left:964.40px;top:268.83px;line-height:12px;font-size:8px;color:#2A5CDC;-webkit-text-stroke:0.25px">终端</div>
<div class="a" style="left:991.40px;top:268.83px;line-height:12px;font-size:8px;color:#2A5CDC;-webkit-text-stroke:0.25px">日志</div>
<div class="a" style="left:1017.80px;top:268.83px;line-height:12px;font-size:8px;color:#2A5CDC;-webkit-text-stroke:0.25px">更多</div>
<div style="position:absolute;left:128.20px;top:329.52px;width:923.60px;height:1.00px;background:#EDEEF1"></div>
<div class="cb" style="left:135px;top:307.19px"></div>
<div class="a" style="left:163.20px;top:305.49px;line-height:12px;font-size:8.3px;color:#2A5CDC;">immich_cn</div>
<div class="a" style="left:279.90px;top:305.49px;line-height:12px;font-size:8.3px;color:#555;">dezhao/immich_cn:...</div>
<div style="position:absolute;left:375.70px;top:303.89px;width:32.60px;height:14.20px;background:#EEF8EA;border:1px solid #E4F4DC;border-radius:7px"></div>
<div class="a" style="left:376.00px;top:304.99px;width:32.00px;text-align:center;line-height:12px;font-size:7px;color:#6DC44A;-webkit-text-stroke:0.2px">已启动</div>
<div class="a" style="left:438.80px;top:300.09px;line-height:10px;font-size:7.0px;color:#555;">CPU: 0.07%</div>
<div class="a" style="left:438.80px;top:313.49px;line-height:10px;font-size:7.0px;color:#555;">内存: 4.91%</div>
<svg style="position:absolute;left:480.8px;top:313.89px" width="3" height="7" viewBox="0 0 3 7"><circle cx="1.5" cy="1" r="0.75" fill="#3A86D8"/><circle cx="1.5" cy="3.4" r="0.75" fill="#3A86D8"/><circle cx="1.5" cy="5.8" r="0.75" fill="#3A86D8"/></svg>
<div class="a" style="left:514.70px;top:305.49px;line-height:12px;font-size:8.3px;color:#555;">172.29.144.4</div>
<div style="position:absolute;left:702.40px;top:304.29px;width:95.40px;height:14.40px;background:#fff;border:1px solid #E3E5EA;border-radius:2px"></div>
<svg style="position:absolute;left:710.3px;top:308.29px" width="6" height="6" viewBox="0 0 6 6"><path d="M5.6 0.4L0.4 2.6L2.6 3.4L3.4 5.6Z" fill="none" stroke="#666" stroke-width="0.7" stroke-linejoin="round"/></svg>
<div class="a" style="left:718.70px;top:305.49px;line-height:12px;font-size:7.0px;color:#555;">0.0.0.0:8586-&gt;8080/tcp</div>
<div class="a" style="left:828.70px;top:306.49px;line-height:12px;font-size:8.2px;color:#555;">Up 22 hours</div>
<div class="a" style="left:964.40px;top:306.69px;line-height:12px;font-size:8px;color:#2A5CDC;-webkit-text-stroke:0.25px">终端</div>
<div class="a" style="left:991.40px;top:306.69px;line-height:12px;font-size:8px;color:#2A5CDC;-webkit-text-stroke:0.25px">日志</div>
<div class="a" style="left:1017.80px;top:306.69px;line-height:12px;font-size:8px;color:#2A5CDC;-webkit-text-stroke:0.25px">更多</div>
<div style="position:absolute;left:128.20px;top:367.38px;width:923.60px;height:1.00px;background:#EDEEF1"></div>
<div class="cb" style="left:135px;top:345.05px"></div>
<div class="a" style="left:163.20px;top:343.35px;line-height:12px;font-size:8.3px;color:#2A5CDC;">postgres_immich</div>
<div class="a" style="left:279.90px;top:343.35px;line-height:12px;font-size:8.3px;color:#555;">tensorchord/pgvect...</div>
<div style="position:absolute;left:375.70px;top:341.75px;width:32.60px;height:14.20px;background:#EEF8EA;border:1px solid #E4F4DC;border-radius:7px"></div>
<div class="a" style="left:376.00px;top:342.85px;width:32.00px;text-align:center;line-height:12px;font-size:7px;color:#6DC44A;-webkit-text-stroke:0.2px">已启动</div>
<div class="a" style="left:438.80px;top:337.95px;line-height:10px;font-size:7.0px;color:#555;">CPU: 0.01%</div>
<div class="a" style="left:438.80px;top:351.35px;line-height:10px;font-size:7.0px;color:#555;">内存: 0.56%</div>
<svg style="position:absolute;left:480.8px;top:351.75px" width="3" height="7" viewBox="0 0 3 7"><circle cx="1.5" cy="1" r="0.75" fill="#3A86D8"/><circle cx="1.5" cy="3.4" r="0.75" fill="#3A86D8"/><circle cx="1.5" cy="5.8" r="0.75" fill="#3A86D8"/></svg>
<div class="a" style="left:514.70px;top:343.35px;line-height:12px;font-size:8.3px;color:#555;">172.29.144.3</div>
<div style="position:absolute;left:702.40px;top:342.15px;width:95.40px;height:14.40px;background:#fff;border:1px solid #E3E5EA;border-radius:2px"></div>
<svg style="position:absolute;left:710.3px;top:346.15px" width="6" height="6" viewBox="0 0 6 6"><path d="M5.6 0.4L0.4 2.6L2.6 3.4L3.4 5.6Z" fill="none" stroke="#666" stroke-width="0.7" stroke-linejoin="round"/></svg>
<div class="a" style="left:718.70px;top:343.35px;line-height:12px;font-size:7.0px;color:#555;">0.0.0.0:5432-&gt;5432/tcp</div>
<div class="a" style="left:828.70px;top:344.35px;line-height:12px;font-size:8.2px;color:#555;">Up 22 hours</div>
<div class="a" style="left:964.40px;top:344.55px;line-height:12px;font-size:8px;color:#2A5CDC;-webkit-text-stroke:0.25px">终端</div>
<div class="a" style="left:991.40px;top:344.55px;line-height:12px;font-size:8px;color:#2A5CDC;-webkit-text-stroke:0.25px">日志</div>
<div class="a" style="left:1017.80px;top:344.55px;line-height:12px;font-size:8px;color:#2A5CDC;-webkit-text-stroke:0.25px">更多</div>
<div style="position:absolute;left:128.20px;top:405.24px;width:923.60px;height:1.00px;background:#EDEEF1"></div>
<div class="cb" style="left:135px;top:382.91px"></div>
<div class="a" style="left:163.20px;top:381.21px;line-height:12px;font-size:8.3px;color:#2A5CDC;">redis_immich</div>
<div class="a" style="left:279.90px;top:381.21px;line-height:12px;font-size:8.3px;color:#555;">redis</div>
<div style="position:absolute;left:375.70px;top:379.61px;width:32.60px;height:14.20px;background:#EEF8EA;border:1px solid #E4F4DC;border-radius:7px"></div>
<div class="a" style="left:376.00px;top:380.71px;width:32.00px;text-align:center;line-height:12px;font-size:7px;color:#6DC44A;-webkit-text-stroke:0.2px">已启动</div>
<div class="a" style="left:438.80px;top:375.81px;line-height:10px;font-size:7.0px;color:#555;">CPU: 0.11%</div>
<div class="a" style="left:438.80px;top:389.21px;line-height:10px;font-size:7.0px;color:#555;">内存: 0.01%</div>
<svg style="position:absolute;left:480.8px;top:389.61px" width="3" height="7" viewBox="0 0 3 7"><circle cx="1.5" cy="1" r="0.75" fill="#3A86D8"/><circle cx="1.5" cy="3.4" r="0.75" fill="#3A86D8"/><circle cx="1.5" cy="5.8" r="0.75" fill="#3A86D8"/></svg>
<div class="a" style="left:514.70px;top:381.21px;line-height:12px;font-size:8.3px;color:#555;">172.29.144.2</div>
<div style="position:absolute;left:702.40px;top:380.01px;width:95.40px;height:14.40px;background:#fff;border:1px solid #E3E5EA;border-radius:2px"></div>
<svg style="position:absolute;left:710.3px;top:384.01px" width="6" height="6" viewBox="0 0 6 6"><path d="M5.6 0.4L0.4 2.6L2.6 3.4L3.4 5.6Z" fill="none" stroke="#666" stroke-width="0.7" stroke-linejoin="round"/></svg>
<div class="a" style="left:718.70px;top:381.21px;line-height:12px;font-size:7.0px;color:#555;">0.0.0.0:6379-&gt;6379/tcp</div>
<div class="a" style="left:828.70px;top:382.21px;line-height:12px;font-size:8.2px;color:#555;">Up 22 hours</div>
<div class="a" style="left:964.40px;top:382.41px;line-height:12px;font-size:8px;color:#2A5CDC;-webkit-text-stroke:0.25px">终端</div>
<div class="a" style="left:991.40px;top:382.41px;line-height:12px;font-size:8px;color:#2A5CDC;-webkit-text-stroke:0.25px">日志</div>
<div class="a" style="left:1017.80px;top:382.41px;line-height:12px;font-size:8px;color:#2A5CDC;-webkit-text-stroke:0.25px">更多</div>
<div style="position:absolute;left:128.20px;top:443.10px;width:923.60px;height:1.00px;background:#EDEEF1"></div>
<div class="cb" style="left:135px;top:420.77px"></div>
<div class="a" style="left:163.20px;top:419.07px;line-height:12px;font-size:8.3px;color:#2A5CDC;">glance</div>
<div class="a" style="left:279.90px;top:419.07px;line-height:12px;font-size:8.3px;color:#555;">glanceapp/glance</div>
<div style="position:absolute;left:375.70px;top:417.47px;width:32.60px;height:14.20px;background:#EEF8EA;border:1px solid #E4F4DC;border-radius:7px"></div>
<div class="a" style="left:376.00px;top:418.57px;width:32.00px;text-align:center;line-height:12px;font-size:7px;color:#6DC44A;-webkit-text-stroke:0.2px">已启动</div>
<div class="a" style="left:438.80px;top:413.67px;line-height:10px;font-size:7.0px;color:#555;">CPU: 0.00%</div>
<div class="a" style="left:438.80px;top:427.07px;line-height:10px;font-size:7.0px;color:#555;">内存: 0.03%</div>
<svg style="position:absolute;left:480.8px;top:427.47px" width="3" height="7" viewBox="0 0 3 7"><circle cx="1.5" cy="1" r="0.75" fill="#3A86D8"/><circle cx="1.5" cy="3.4" r="0.75" fill="#3A86D8"/><circle cx="1.5" cy="5.8" r="0.75" fill="#3A86D8"/></svg>
<div class="a" style="left:514.70px;top:419.07px;line-height:12px;font-size:8.3px;color:#555;">172.29.132.2</div>
<div style="position:absolute;left:702.40px;top:417.87px;width:95.40px;height:14.40px;background:#fff;border:1px solid #E3E5EA;border-radius:2px"></div>
<svg style="position:absolute;left:710.3px;top:421.87px" width="6" height="6" viewBox="0 0 6 6"><path d="M5.6 0.4L0.4 2.6L2.6 3.4L3.4 5.6Z" fill="none" stroke="#666" stroke-width="0.7" stroke-linejoin="round"/></svg>
<div class="a" style="left:718.70px;top:419.07px;line-height:12px;font-size:7.0px;color:#555;">0.0.0.0:9969-&gt;8080/tcp</div>
<div class="a" style="left:828.70px;top:420.07px;line-height:12px;font-size:8.2px;color:#555;">Up 5 days</div>
<div class="a" style="left:964.40px;top:420.27px;line-height:12px;font-size:8px;color:#2A5CDC;-webkit-text-stroke:0.25px">终端</div>
<div class="a" style="left:991.40px;top:420.27px;line-height:12px;font-size:8px;color:#2A5CDC;-webkit-text-stroke:0.25px">日志</div>
<div class="a" style="left:1017.80px;top:420.27px;line-height:12px;font-size:8px;color:#2A5CDC;-webkit-text-stroke:0.25px">更多</div>
<div style="position:absolute;left:128.20px;top:480.96px;width:923.60px;height:1.00px;background:#EDEEF1"></div>
<div class="cb" style="left:135px;top:458.63px"></div>
<div class="a" style="left:163.20px;top:456.93px;line-height:12px;font-size:8.3px;color:#2A5CDC;">minio</div>
<div class="a" style="left:279.90px;top:456.93px;line-height:12px;font-size:8.3px;color:#555;">quay.io/minio/minio</div>
<div style="position:absolute;left:375.70px;top:455.33px;width:32.60px;height:14.20px;background:#EEF8EA;border:1px solid #E4F4DC;border-radius:7px"></div>
<div class="a" style="left:376.00px;top:456.43px;width:32.00px;text-align:center;line-height:12px;font-size:7px;color:#6DC44A;-webkit-text-stroke:0.2px">已启动</div>
<div class="a" style="left:438.80px;top:451.53px;line-height:10px;font-size:7.0px;color:#555;">CPU: 0.01%</div>
<div class="a" style="left:438.80px;top:464.93px;line-height:10px;font-size:7.0px;color:#555;">内存: 0.31%</div>
<svg style="position:absolute;left:480.8px;top:465.33px" width="3" height="7" viewBox="0 0 3 7"><circle cx="1.5" cy="1" r="0.75" fill="#3A86D8"/><circle cx="1.5" cy="3.4" r="0.75" fill="#3A86D8"/><circle cx="1.5" cy="5.8" r="0.75" fill="#3A86D8"/></svg>
<div class="a" style="left:514.70px;top:456.93px;line-height:12px;font-size:8.3px;color:#555;">172.29.36.2</div>
<div style="position:absolute;left:702.40px;top:455.73px;width:114.50px;height:14.40px;background:#fff;border:1px solid #E3E5EA;border-radius:2px"></div>
<svg style="position:absolute;left:710.3px;top:459.73px" width="6" height="6" viewBox="0 0 6 6"><path d="M5.6 0.4L0.4 2.6L2.6 3.4L3.4 5.6Z" fill="none" stroke="#666" stroke-width="0.7" stroke-linejoin="round"/></svg>
<div class="a" style="left:718.70px;top:456.93px;line-height:12px;font-size:7.0px;color:#555;">0.0.0.0:9000-9001-&gt;9000-9...</div>
<div class="a" style="left:828.70px;top:457.93px;line-height:12px;font-size:8.2px;color:#555;">Up 7 days</div>
<div class="a" style="left:964.40px;top:458.13px;line-height:12px;font-size:8px;color:#2A5CDC;-webkit-text-stroke:0.25px">终端</div>
<div class="a" style="left:991.40px;top:458.13px;line-height:12px;font-size:8px;color:#2A5CDC;-webkit-text-stroke:0.25px">日志</div>
<div class="a" style="left:1017.80px;top:458.13px;line-height:12px;font-size:8px;color:#2A5CDC;-webkit-text-stroke:0.25px">更多</div>
<div style="position:absolute;left:128.20px;top:518.82px;width:923.60px;height:1.00px;background:#EDEEF1"></div>
<div class="cb" style="left:135px;top:496.49px"></div>
<div class="a" style="left:163.20px;top:494.79px;line-height:12px;font-size:8.3px;color:#2A5CDC;">cloudflared-cloudflared-1</div>
<div class="a" style="left:279.90px;top:494.79px;line-height:12px;font-size:8.3px;color:#555;">cloudflare/cloudflar...</div>
<div style="position:absolute;left:375.70px;top:493.19px;width:32.60px;height:14.20px;background:#EEF8EA;border:1px solid #E4F4DC;border-radius:7px"></div>
<div class="a" style="left:376.00px;top:494.29px;width:32.00px;text-align:center;line-height:12px;font-size:7px;color:#6DC44A;-webkit-text-stroke:0.2px">已启动</div>
<div class="a" style="left:438.80px;top:489.39px;line-height:10px;font-size:7.0px;color:#555;">CPU: 0.01%</div>
<div class="a" style="left:438.80px;top:502.79px;line-height:10px;font-size:7.0px;color:#555;">内存: 0.05%</div>
<svg style="position:absolute;left:480.8px;top:503.19px" width="3" height="7" viewBox="0 0 3 7"><circle cx="1.5" cy="1" r="0.75" fill="#3A86D8"/><circle cx="1.5" cy="3.4" r="0.75" fill="#3A86D8"/><circle cx="1.5" cy="5.8" r="0.75" fill="#3A86D8"/></svg>
<div class="a" style="left:514.70px;top:494.79px;line-height:12px;font-size:8.3px;color:#555;">172.29.4.2</div>
<div class="a" style="left:828.70px;top:495.79px;line-height:12px;font-size:8.2px;color:#555;">Up 7 days</div>
<div class="a" style="left:964.40px;top:495.99px;line-height:12px;font-size:8px;color:#2A5CDC;-webkit-text-stroke:0.25px">终端</div>
<div class="a" style="left:991.40px;top:495.99px;line-height:12px;font-size:8px;color:#2A5CDC;-webkit-text-stroke:0.25px">日志</div>
<div class="a" style="left:1017.80px;top:495.99px;line-height:12px;font-size:8px;color:#2A5CDC;-webkit-text-stroke:0.25px">更多</div>
<div style="position:absolute;left:128.20px;top:556.68px;width:923.60px;height:1.00px;background:#EDEEF1"></div>
<div class="cb" style="left:135px;top:534.35px"></div>
<div class="a" style="left:163.20px;top:532.65px;line-height:12px;font-size:8.3px;color:#2A5CDC;">photopea</div>
<div class="a" style="left:279.90px;top:532.65px;line-height:12px;font-size:8.3px;color:#555;">shtse8/photopea:1.0</div>
<div style="position:absolute;left:375.70px;top:531.05px;width:32.60px;height:14.20px;background:#FDF6EC;border:1px solid #FAE9D2;border-radius:7px"></div>
<div class="a" style="left:376.00px;top:532.15px;width:32.00px;text-align:center;line-height:12px;font-size:7px;color:#E8A54A;-webkit-text-stroke:0.2px">已停止</div>
<div class="a" style="left:438.80px;top:527.25px;line-height:10px;font-size:7.0px;color:#555;">CPU: 0.00%</div>
<div class="a" style="left:438.80px;top:540.65px;line-height:10px;font-size:7.0px;color:#555;">内存: 0.00%</div>
<svg style="position:absolute;left:480.8px;top:541.05px" width="3" height="7" viewBox="0 0 3 7"><circle cx="1.5" cy="1" r="0.75" fill="#3A86D8"/><circle cx="1.5" cy="3.4" r="0.75" fill="#3A86D8"/><circle cx="1.5" cy="5.8" r="0.75" fill="#3A86D8"/></svg>
<div class="a" style="left:828.70px;top:533.65px;line-height:12px;font-size:8.2px;color:#555;">Exited (137) 2 weeks ago</div>
<div class="a" style="left:964.40px;top:533.85px;line-height:12px;font-size:8px;color:#97B2EE;-webkit-text-stroke:0.25px">终端</div>
<div class="a" style="left:991.40px;top:533.85px;line-height:12px;font-size:8px;color:#2A5CDC;-webkit-text-stroke:0.25px">日志</div>
<div class="a" style="left:1017.80px;top:533.85px;line-height:12px;font-size:8px;color:#2A5CDC;-webkit-text-stroke:0.25px">更多</div>
<div style="position:absolute;left:128.20px;top:594.54px;width:923.60px;height:1.00px;background:#EDEEF1"></div>
<div class="cb" style="left:135px;top:572.21px"></div>
<div class="a" style="left:163.20px;top:570.51px;line-height:12px;font-size:8.3px;color:#2A5CDC;">webssh</div>
<div class="a" style="left:279.90px;top:570.51px;line-height:12px;font-size:8.3px;color:#555;">jrohy/webssh</div>
<div style="position:absolute;left:375.70px;top:568.91px;width:32.60px;height:14.20px;background:#EEF8EA;border:1px solid #E4F4DC;border-radius:7px"></div>
<div class="a" style="left:376.00px;top:570.01px;width:32.00px;text-align:center;line-height:12px;font-size:7px;color:#6DC44A;-webkit-text-stroke:0.2px">已启动</div>
<div class="a" style="left:438.80px;top:565.11px;line-height:10px;font-size:7.0px;color:#555;">CPU: 0.00%</div>
<div class="a" style="left:438.80px;top:578.51px;line-height:10px;font-size:7.0px;color:#555;">内存: 0.04%</div>
<svg style="position:absolute;left:480.8px;top:578.91px" width="3" height="7" viewBox="0 0 3 7"><circle cx="1.5" cy="1" r="0.75" fill="#3A86D8"/><circle cx="1.5" cy="3.4" r="0.75" fill="#3A86D8"/><circle cx="1.5" cy="5.8" r="0.75" fill="#3A86D8"/></svg>
<div class="a" style="left:514.70px;top:570.51px;line-height:12px;font-size:8.3px;color:#555;">172.29.44.2</div>
<div style="position:absolute;left:702.40px;top:569.31px;width:95.40px;height:14.40px;background:#fff;border:1px solid #E3E5EA;border-radius:2px"></div>
<svg style="position:absolute;left:710.3px;top:573.31px" width="6" height="6" viewBox="0 0 6 6"><path d="M5.6 0.4L0.4 2.6L2.6 3.4L3.4 5.6Z" fill="none" stroke="#666" stroke-width="0.7" stroke-linejoin="round"/></svg>
<div class="a" style="left:718.70px;top:570.51px;line-height:12px;font-size:7.0px;color:#555;">0.0.0.0:8071-&gt;5032/tcp</div>
<div class="a" style="left:828.70px;top:571.51px;line-height:12px;font-size:8.2px;color:#555;">Up 11 days</div>
<div class="a" style="left:964.40px;top:571.71px;line-height:12px;font-size:8px;color:#2A5CDC;-webkit-text-stroke:0.25px">终端</div>
<div class="a" style="left:991.40px;top:571.71px;line-height:12px;font-size:8px;color:#2A5CDC;-webkit-text-stroke:0.25px">日志</div>
<div class="a" style="left:1017.80px;top:571.71px;line-height:12px;font-size:8px;color:#2A5CDC;-webkit-text-stroke:0.25px">更多</div>
<div style="position:absolute;left:128.20px;top:632.40px;width:923.60px;height:1.00px;background:#EDEEF1"></div>
<div class="cb" style="left:135px;top:610.07px"></div>
<div class="a" style="left:163.20px;top:608.37px;line-height:12px;font-size:8.3px;color:#2A5CDC;">cryptgeon-app</div>
<div class="a" style="left:279.90px;top:608.37px;line-height:12px;font-size:8.3px;color:#555;">cupcakearmy/crypt...</div>
<div style="position:absolute;left:375.70px;top:606.77px;width:32.60px;height:14.20px;background:#EEF8EA;border:1px solid #E4F4DC;border-radius:7px"></div>
<div class="a" style="left:376.00px;top:607.87px;width:32.00px;text-align:center;line-height:12px;font-size:7px;color:#6DC44A;-webkit-text-stroke:0.2px">已启动</div>
<div class="a" style="left:438.80px;top:602.97px;line-height:10px;font-size:7.0px;color:#555;">CPU: 0.03%</div>
<div class="a" style="left:438.80px;top:616.37px;line-height:10px;font-size:7.0px;color:#555;">内存: 0.01%</div>
<svg style="position:absolute;left:480.8px;top:616.77px" width="3" height="7" viewBox="0 0 3 7"><circle cx="1.5" cy="1" r="0.75" fill="#3A86D8"/><circle cx="1.5" cy="3.4" r="0.75" fill="#3A86D8"/><circle cx="1.5" cy="5.8" r="0.75" fill="#3A86D8"/></svg>
<div class="a" style="left:514.70px;top:608.37px;line-height:12px;font-size:8.3px;color:#555;">172.29.40.3</div>
<div style="position:absolute;left:702.40px;top:607.17px;width:95.40px;height:14.40px;background:#fff;border:1px solid #E3E5EA;border-radius:2px"></div>
<svg style="position:absolute;left:710.3px;top:611.17px" width="6" height="6" viewBox="0 0 6 6"><path d="M5.6 0.4L0.4 2.6L2.6 3.4L3.4 5.6Z" fill="none" stroke="#666" stroke-width="0.7" stroke-linejoin="round"/></svg>
<div class="a" style="left:718.70px;top:608.37px;line-height:12px;font-size:7.0px;color:#555;">0.0.0.0:6767-&gt;8000/tcp</div>
<div class="a" style="left:828.70px;top:609.37px;line-height:12px;font-size:8.2px;color:#555;">Up 11 days</div>
<div class="a" style="left:964.40px;top:609.57px;line-height:12px;font-size:8px;color:#2A5CDC;-webkit-text-stroke:0.25px">终端</div>
<div class="a" style="left:991.40px;top:609.57px;line-height:12px;font-size:8px;color:#2A5CDC;-webkit-text-stroke:0.25px">日志</div>
<div class="a" style="left:1017.80px;top:609.57px;line-height:12px;font-size:8px;color:#2A5CDC;-webkit-text-stroke:0.25px">更多</div>
<div class="a" style="left:779.30px;top:647.80px;line-height:12px;font-size:8.3px;color:#555;">共 15 条</div>
<div style="position:absolute;left:817.80px;top:644.60px;width:74.10px;height:25.40px;background:#fff;border:1px solid #E1E3E8;border-radius:2.5px"></div>
<div class="a" style="left:825.20px;top:647.80px;line-height:12px;font-size:8.3px;color:#555;">10条/页</div>
<div class="chev" style="left:878.5px;top:650.5px;border-color:#A8ABB2"></div>
<div class="a" style="left:909.00px;top:647.80px;line-height:12px;font-size:8.3px;color:#C0C4CC;">&lt;</div>
<div class="a" style="left:928.50px;top:647.80px;line-height:12px;font-size:8.3px;color:#2A5CDC;-webkit-text-stroke:0.25px">1</div>
<div class="a" style="left:945.50px;top:647.80px;line-height:12px;font-size:8.3px;color:#333;">2</div>
<div class="a" style="left:965.50px;top:647.80px;line-height:12px;font-size:8.3px;color:#555;">&gt;</div>
<div class="a" style="left:986.70px;top:647.80px;line-height:12px;font-size:8.3px;color:#555;">前往</div>
<div style="position:absolute;left:1006.00px;top:644.60px;width:32.50px;height:25.40px;background:#fff;border:1px solid #E1E3E8;border-radius:2.5px"></div>
<div class="a" style="left:1019.50px;top:647.80px;line-height:12px;font-size:8.3px;color:#555;">1</div>
<div class="a" style="left:1044.40px;top:647.80px;line-height:12px;font-size:8.3px;color:#555;">页</div>
<div style="position:absolute;left:1075.00px;top:70.00px;width:5.00px;height:558.50px;background:#D9D9DB;border-radius:2px 0 0 2px"></div>
<div style="position:absolute;left:1064.00px;top:70.00px;width:11.00px;height:587.00px;background:#F3F3F3"></div>
<div style="position:absolute;left:105.00px;top:657.00px;width:975.00px;height:28.00px;background:#fff;border-top:1px solid #E6E8EC"></div>
<div class="a" style="left:116.50px;top:666.20px;line-height:12px;font-size:7.5px;color:#666;">Copyright © 2014-2024 FIT2CLOUD 飞致云</div>
<div class="a" style="left:806.30px;top:665.90px;line-height:12px;font-size:8px;color:#2A5CDC;">论坛求助</div>
<div style="position:absolute;left:845.80px;top:666.50px;width:0.80px;height:10.00px;background:#E6E8EC"></div>
<div class="a" style="left:853.00px;top:665.90px;line-height:12px;font-size:8px;color:#2A5CDC;">使用手册</div>
<div style="position:absolute;left:892.00px;top:666.50px;width:0.80px;height:10.00px;background:#E6E8EC"></div>
<div class="a" style="left:899.60px;top:665.90px;line-height:12px;font-size:8px;color:#2A5CDC;">项目地址</div>
<div style="position:absolute;left:939.00px;top:666.50px;width:0.80px;height:10.00px;background:#E6E8EC"></div>
<div class="a" style="left:946.40px;top:665.90px;line-height:12px;font-size:8px;color:#2A5CDC;">社区版：</div>
<div class="a" style="left:980.70px;top:665.90px;line-height:12px;font-size:8.3px;color:#222;letter-spacing:0.25px;-webkit-text-stroke:0.15px">v1.10.13-lts</div>
<div class="a" style="left:1028.90px;top:665.90px;line-height:12px;font-size:8px;color:#2A5CDC;">(检查更新)</div>
<svg style="position:absolute;left:910px;top:638px" width="40" height="40" viewBox="0 0 40 40"><path d="M25.2 5.9A16 16 0 0 1 11.9 34.5" fill="none" stroke="#fff" stroke-width="2.6"/><path d="M25.2 5.9A16 16 0 0 1 11.9 34.5" fill="none" stroke="#CFCFCF" stroke-width="1.1"/></svg>
<div class="a" style="left:913.50px;top:643.50px;line-height:26px;font-size:26px;color:#CFCFCF;font-weight:300;-webkit-text-stroke:0;text-shadow:0 0 1px #fff,0 0 1px #fff,0 0 1px #fff">值</div>
<div class="a" style="left:954.00px;top:644.50px;line-height:26px;font-size:21.5px;color:#CFCFCF;font-weight:300;letter-spacing:1.2px;-webkit-text-stroke:0;text-shadow:0 0 1px #fff,0 0 1px #fff,0 0 1px #fff">什么值得买</div>
</div></body></html>
